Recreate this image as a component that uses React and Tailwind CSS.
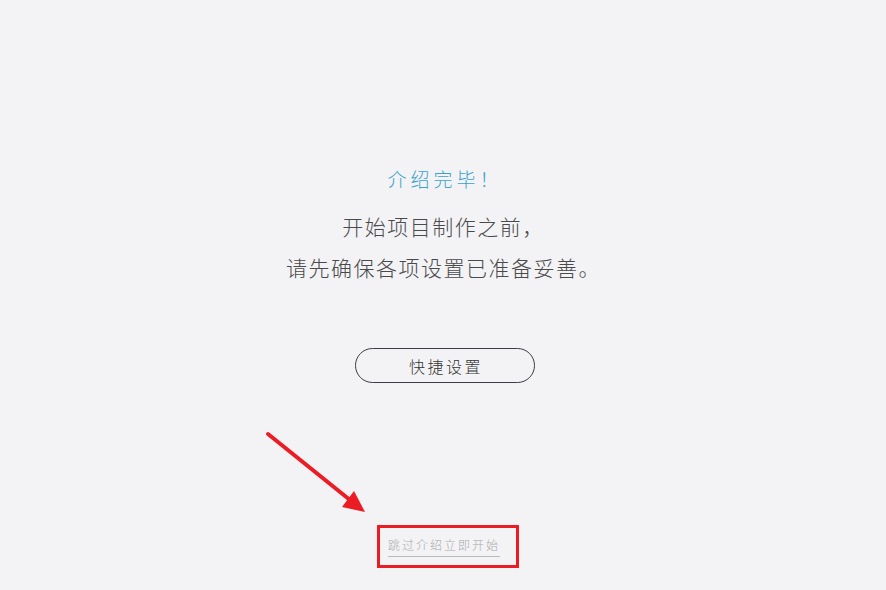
export default function App() {
  return (
    <div
      className="relative flex h-[590px] w-full flex-col items-center overflow-hidden bg-[#f3f3f6]"
      style={{ fontFamily: '"Noto Sans CJK SC", "Noto Sans", sans-serif' }}
    >
      <h1 className="mt-[165px] pl-[4px] text-[19px] font-light leading-[28px] tracking-[4px] text-[#3aa3c9]">
        介绍完毕！
      </h1>
      <div className="mt-[13px] pl-[1px] text-center text-[21px] font-light leading-[41px] tracking-[1.5px] text-[#4a4a4a]">
        <p>开始项目制作之前，</p>
        <p>请先确保各项设置已准备妥善。</p>
      </div>
      <button className="ml-[4px] mt-[60px] flex h-[35px] w-[180px] items-center justify-center rounded-full border border-[#3b3d45] pl-[2px] text-[16px] font-light tracking-[2.5px] text-[#333]">
        快捷设置
      </button>
      <div className="ml-[10px] mt-[142px] flex h-[43px] w-[142px] items-center justify-center border-[3px] border-[#ec1c24] pr-[8px]">
        <span className="border-b border-[#bbb] pb-[3px] text-[12px] font-light leading-[16px] tracking-[2px] text-[#aaa]">
          跳过介绍立即开始
        </span>
      </div>
      <svg
        className="pointer-events-none absolute left-[262px] top-[428px]"
        width="110"
        height="90"
        viewBox="0 0 110 90"
      >
        <line x1="6" y1="6" x2="88" y2="72" stroke="#ec1c24" strokeWidth="4" strokeLinecap="round" />
        <polygon points="103,84 80,79 92,63" fill="#ec1c24" />
      </svg>
    </div>
  );
}
